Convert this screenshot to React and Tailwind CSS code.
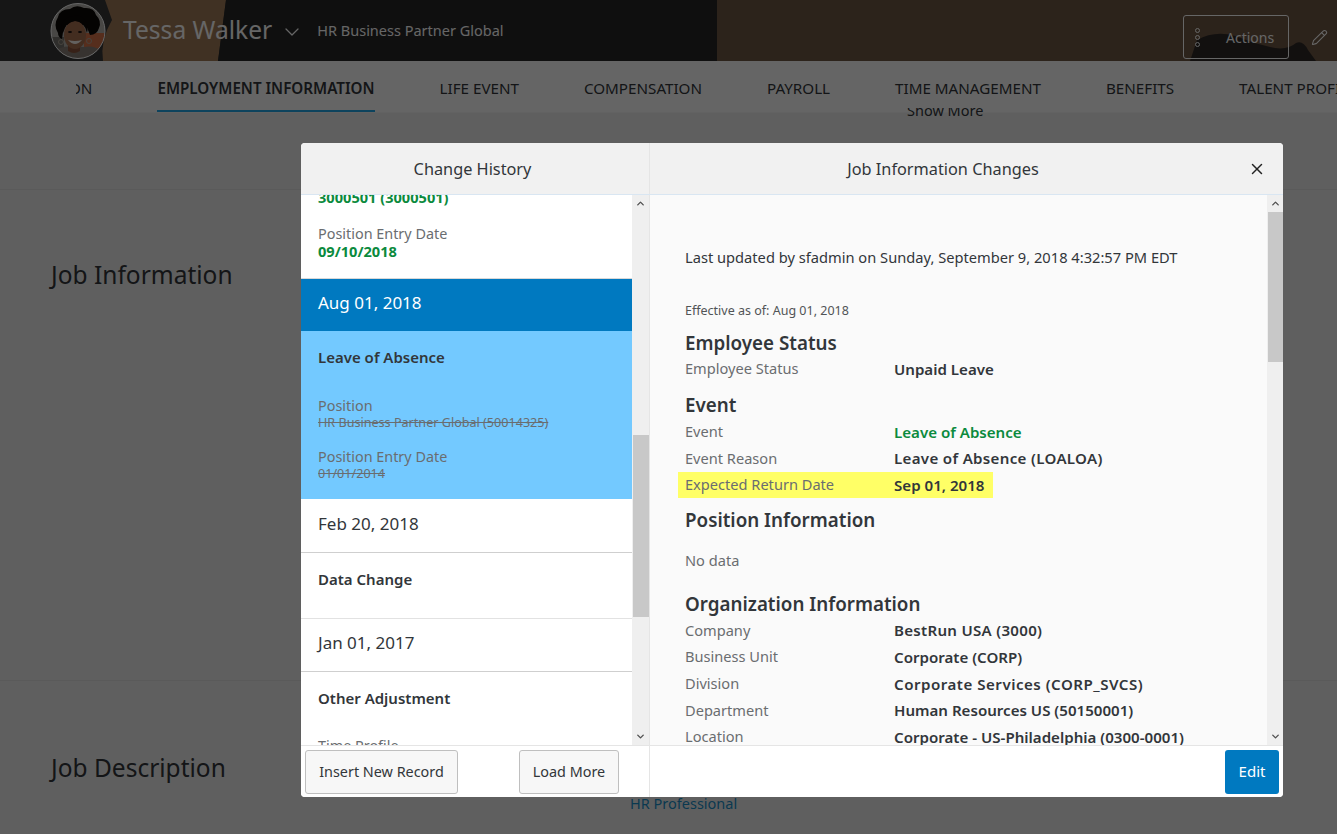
import { ChevronDown, ChevronUp, Pencil, X } from 'lucide-react'

const tabs = ['LIFE EVENT', 'COMPENSATION', 'PAYROLL', 'TIME MANAGEMENT', 'BENEFITS', 'TALENT PROFILE']

function Avatar() {
	return (
		<svg viewBox="0 0 56 56" className="w-[56px] h-[56px] shrink-0">
			<defs>
				<clipPath id="avatarClip"><ellipse cx="28" cy="28" rx="27" ry="27.5" /></clipPath>
			</defs>
			<g clipPath="url(#avatarClip)">
				<rect width="56" height="56" fill="#b4b2ac" />
				<rect x="34" y="30" width="22" height="18" fill="#d8744a" />
				<rect x="0" y="34" width="14" height="14" fill="#76736e" />
				<path d="M0 56 L4 48 Q14 42 22 44 L34 44 Q44 42 52 48 L56 56 Z" fill="#8a8078" />
				<path d="M18 38 h12 v10 q-6 4 -12 0 Z" fill="#8a543c" />
				<path d="M8 30 Q3 22 8 14 Q10 6 20 6 Q26 1 34 5 Q44 4 46 12 Q52 18 49 25 Q47 32 40 32 L36 22 L14 22 L12 36 Q8 34 8 30 Z" fill="#0c0807" />
				<ellipse cx="25" cy="32" rx="11" ry="14" fill="#a87052" />
				<path d="M13 30 Q16 19 25 18 Q34 18 37 30 Q40 18 30 13 Q18 11 12 20 Q10 26 13 30 Z" fill="#0c0807" />
				<ellipse cx="20" cy="29" rx="2" ry="1" fill="#1a1210" />
				<ellipse cx="30" cy="29" rx="2" ry="1" fill="#1a1210" />
				<path d="M18 37 Q25 45 32 37 Q25 39 18 37 Z" fill="#f7f3ee" />
				<circle cx="11" cy="39" r="2.5" fill="none" stroke="#b0a898" strokeWidth="1" />
				<circle cx="39" cy="38" r="2.5" fill="none" stroke="#b0a898" strokeWidth="1" />
			</g>
			<ellipse cx="28" cy="28" rx="27" ry="27.5" fill="none" stroke="#ffffff" strokeWidth="1" />
		</svg>
	)
}

function HeaderPhoto() {
	return (
		<svg viewBox="0 0 1337 61" preserveAspectRatio="none" className="absolute inset-0 w-full h-full">
			<rect width="1337" height="61" fill="#383838" />
			<path d="M105 0 L226 0 L218 61 L103 61 Q100 40 112 20 Z" fill="#a07a58" />
			<path d="M226 0 L717 0 L717 61 L218 61 Z" fill="#262626" />
			<path d="M717 0 L1337 0 L1337 61 L717 61 Z" fill="#6f5744" />
			<path d="M1190 61 L1197 40 Q1215 30 1235 36 Q1255 44 1275 48 Q1288 50 1296 43 Q1303 40 1308 50 L1316 61 Z" fill="#2e2a27" />
		</svg>
	)
}

function Row({ label, value, valueClass = 'text-[#32363a]' }) {
	return (
		<div className="flex h-[26.6px] items-center">
			<span className="w-[209px] text-[14.6px] text-[#6a6d70]">{label}</span>
			<span className={'text-[15.1px] font-semibold ' + valueClass}>{value}</span>
		</div>
	)
}

function Scrollbar({ thumbTop, thumbHeight, wide }) {
	return (
		<div className={wide ? 'relative w-[17px] shrink-0 bg-[#efefef] flex flex-col items-center justify-between py-[3px] text-[#505050]' : 'relative w-[16px] shrink-0 bg-[#efefef] flex flex-col items-center justify-between py-[3px] text-[#505050]'}>
			<ChevronUp size={11} strokeWidth={3} />
			<div className="absolute left-[1px] right-0 bg-[#c8c8c8]" style={{ top: thumbTop, height: thumbHeight }} />
			<ChevronDown size={11} strokeWidth={3} />
		</div>
	)
}

export default function App() {
	return (
		<div className="relative w-[1337px] h-[834px] overflow-hidden bg-[#eeeeee] text-[#32363a] font-['Noto_Sans',sans-serif]">
			{/* page behind the dialog */}
			<header className="relative h-[61px] flex items-center pl-[50px] overflow-hidden">
				<HeaderPhoto />
				<div className="relative flex items-center">
					<Avatar />
					<span className="ml-[17px] text-[24.6px] text-white">Tessa Walker</span>
					<ChevronDown size={24} strokeWidth={1.25} className="ml-[8px] mt-[3px] text-white" />
					<span className="ml-[13px] text-[14.5px] text-white">HR Business Partner Global</span>
				</div>
				<button className="absolute left-[1183px] top-[15px] w-[106px] h-[44px] rounded-[3px] border border-white flex items-center text-white text-[14px]">
					<span className="ml-[11px] flex flex-col gap-[2px]">
						<i className="block w-[5px] h-[5px] rounded-full border border-white" />
						<i className="block w-[5px] h-[5px] rounded-full border border-white" />
						<i className="block w-[5px] h-[5px] rounded-full border border-white" />
					</span>
					<span className="ml-[26px]">Actions</span>
				</button>
				<Pencil size={17} strokeWidth={1.5} className="absolute left-[1311px] top-[29px] text-white" />
			</header>

			<nav className="relative h-[52px] bg-[#fdfdfd] border-b border-[#f4f4f4]">
				<div className="ml-[76px] h-full overflow-hidden flex gap-[65px] text-[15.2px] text-[#32363a]">
					<span className="-ml-[7px] pt-[16px]">ON</span>
					<span className="h-full pt-[16px] font-semibold border-b-2 border-[#22a8e8] whitespace-nowrap">EMPLOYMENT INFORMATION</span>
					{tabs.map((t) => (
						<span key={t} className="pt-[16px] whitespace-nowrap">{t}</span>
					))}
				</div>
			</nav>

			<main>
				<div className="relative -mt-[5px] h-[8px] overflow-hidden pl-[907px] text-[14.5px] leading-[18px] text-[#32363a]">
					<span className="block -mt-[7px]">Show More</span>
				</div>
				<section className="mt-[73px] h-[491px] border-t border-[#e2e2e2] pl-[51px] pt-[67px]">
					<h2 className="text-[24.5px] leading-[36px] text-[#32363a]">Job Information</h2>
				</section>
				<section className="relative border-t border-[#e2e2e2] pl-[51px] pt-[69px] flex">
					<h2 className="w-[579px] text-[24.5px] leading-[36px] text-[#32363a]">Job Description</h2>
					<span className="pt-[43px] text-[14.5px] text-[#1a8fc8]">HR Professional</span>
				</section>
			</main>

			<div className="absolute inset-0 bg-black/60" />

			{/* change history dialog */}
			<div className="absolute left-[301px] top-[143px] w-[982px] h-[654px] rounded-[4px] overflow-hidden bg-white flex flex-col text-[14.4px]">
				<div className="h-[52px] shrink-0 flex bg-[#f1f1f1] border-b border-[#d9e6f2] text-[16.3px]">
					<div className="w-[349px] flex items-center justify-center pr-[5px] pt-[1px] border-r border-[#e5e5e5]">Change History</div>
					<div className="relative flex-1 flex items-center justify-center pr-[47px] pt-[1px]">
						Job Information Changes
						<X size={18} strokeWidth={2} className="absolute right-[17px] top-[17px] text-[#222]" />
					</div>
				</div>

				<div className="flex-1 min-h-0 flex">
					<div className="w-[349px] shrink-0 flex border-r border-[#e5e5e5]">
						<div className="flex-1 overflow-hidden">
							<div className="-mt-[12px]">
								<div className="h-[96px] pl-[17px] pt-[5px] border-b border-[#d8d8d8]">
									<p className="h-[18px] leading-[18px] text-[14.6px] font-bold text-[#0b8a3d]">3000501 (3000501)</p>
									<p className="mt-[19px] leading-[18px] text-[#6a6d70]">Position Entry Date</p>
									<p className="-mt-[1px] leading-[18px] text-[14.6px] font-bold text-[#0b8a3d]">09/10/2018</p>
								</div>
								<div className="h-[52px] pl-[17px] pb-[4px] flex items-center bg-[#0079c0] text-white text-[17px]">Aug 01, 2018</div>
								<div className="h-[168px] pl-[17px] pt-[16px] bg-[#73c9ff]">
									<p className="leading-[20px] text-[15px] font-semibold">Leave of Absence</p>
									<p className="mt-[29px] leading-[20px] text-[#6a6d70]">Position</p>
									<p className="text-[12.6px] leading-[14px] line-through text-[#6a6d70]">HR Business Partner Global (50014325)</p>
									<p className="mt-[17px] leading-[20px] text-[#6a6d70]">Position Entry Date</p>
									<p className="text-[12.6px] leading-[14px] line-through text-[#6a6d70]">01/01/2014</p>
								</div>
								<div className="h-[54px] pl-[17px] pb-[4px] flex items-center text-[17px] border-b border-[#cfcfcf]">Feb 20, 2018</div>
								<div className="h-[66px] pl-[17px] pt-[16px] border-b border-[#e2e2e2]">
									<p className="leading-[20px] text-[15px] font-semibold">Data Change</p>
								</div>
								<div className="h-[53px] pl-[17px] pb-[4px] flex items-center text-[17px] border-b border-[#cfcfcf]">Jan 01, 2017</div>
								<div className="pl-[17px] pt-[16px]">
									<p className="leading-[20px] text-[15px] font-semibold">Other Adjustment</p>
									<p className="mt-[28px] leading-[20px] text-[#6a6d70]">Time Profile</p>
								</div>
							</div>
						</div>
						<Scrollbar thumbTop={240} thumbHeight={182} wide />
					</div>

					<div className="flex-1 min-w-0 flex bg-[#fafafa]">
						<div className="flex-1 overflow-hidden pl-[35px] pt-[52px]">
							<p className="leading-[20px] text-[14.66px]">Last updated by sfadmin on Sunday, September 9, 2018 4:32:57 PM EDT</p>
							<p className="mt-[35px] text-[12.5px] leading-[18px] text-[#515456]">Effective as of: Aug 01, 2018</p>
							<h3 className="mt-[11px] text-[18.8px] leading-[25px] font-semibold">Employee Status</h3>
							<Row label="Employee Status" value="Unpaid Leave" />
							<h3 className="mt-[10px] mb-[1px] text-[18.8px] leading-[25px] font-semibold">Event</h3>
							<Row label="Event" value="Leave of Absence" valueClass="text-[#0b8a3d]" />
							<Row label="Event Reason" value="Leave of Absence (LOALOA)" valueClass="text-[#32363a] tracking-[0.32px]" />
							<div className="-ml-[7px] w-[315px] pl-[7px] bg-[#ffff66]">
								<Row label="Expected Return Date" value="Sep 01, 2018" />
							</div>
							<h3 className="mt-[10px] text-[18.8px] leading-[25px] font-semibold">Position Information</h3>
							<p className="mt-[17px] leading-[20px] text-[14.6px] text-[#6a6d70]">No data</p>
							<h3 className="mt-[22px] text-[18.8px] leading-[25px] font-semibold">Organization Information</h3>
							<Row label="Company" value="BestRun USA (3000)" valueClass="text-[#32363a] tracking-[0.28px]" />
							<Row label="Business Unit" value="Corporate (CORP)" />
							<Row label="Division" value="Corporate Services (CORP_SVCS)" valueClass="text-[#32363a] tracking-[0.5px]" />
							<Row label="Department" value="Human Resources US (50150001)" />
							<Row label="Location" value="Corporate - US-Philadelphia (0300-0001)" />
						</div>
						<Scrollbar thumbTop={17} thumbHeight={150} />
					</div>
				</div>

				<div className="h-[52px] shrink-0 flex bg-white border-t border-[#e5e5e5]">
					<div className="w-[349px] border-r border-[#e5e5e5] flex items-center justify-between pl-[4px] pr-[30px]">
						<button className="w-[153px] h-[44px] rounded-[3px] border border-[#bfbfbf] bg-[#f7f7f7]">Insert New Record</button>
						<button className="w-[100px] h-[44px] rounded-[3px] border border-[#bfbfbf] bg-[#f7f7f7]">Load More</button>
					</div>
					<div className="flex-1 flex items-center justify-end pr-[4px]">
						<button className="w-[54px] h-[44px] rounded-[3px] bg-[#0079c0] text-[15px] text-white">Edit</button>
					</div>
				</div>
			</div>
		</div>
	)
}
